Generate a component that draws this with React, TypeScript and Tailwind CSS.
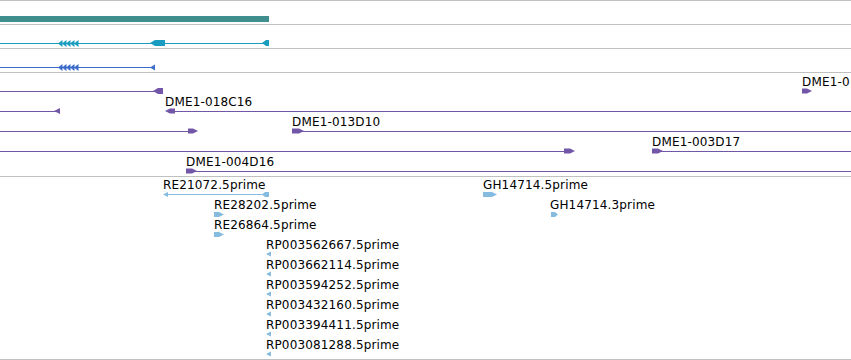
import React from "react";

type Label = { text: string; x: number; top: number };

// glyph helpers, all in page coordinates
const leftArrow = (x: number, y: number, w: number, h: number, tip = 5) =>
  `${x},${y} ${x + tip},${y - h / 2} ${x + w},${y - h / 2} ${x + w},${y + h / 2} ${x + tip},${y + h / 2}`;
const rightArrow = (x: number, y: number, w: number, h: number, tip = 5) =>
  `${x},${y - h / 2} ${x + w - tip},${y - h / 2} ${x + w},${y} ${x + w - tip},${y + h / 2} ${x},${y + h / 2}`;
const tri = (x: number, y: number, w: number, h: number) =>
  `${x},${y} ${x + w},${y - h / 2} ${x + w},${y + h / 2}`;

const cluster = (y: number) => [58, 62, 66, 70, 74].map((x) => tri(x, y, 4.5, 7));

const purpleLabels: Label[] = [
  { text: "DME1-0", x: 802, top: 75 },
  { text: "DME1-018C16", x: 165, top: 95 },
  { text: "DME1-013D10", x: 292, top: 115 },
  { text: "DME1-003D17", x: 652, top: 135 },
  { text: "DME1-004D16", x: 186, top: 155 },
];

const estLabels: Label[] = [
  { text: "RE21072.5prime", x: 163, top: 178 },
  { text: "GH14714.5prime", x: 483, top: 178 },
  { text: "RE28202.5prime", x: 214, top: 198 },
  { text: "GH14714.3prime", x: 550, top: 198 },
  { text: "RE26864.5prime", x: 214, top: 218 },
  { text: "RP003562667.5prime", x: 266, top: 238 },
  { text: "RP003662114.5prime", x: 266, top: 258 },
  { text: "RP003594252.5prime", x: 266, top: 278 },
  { text: "RP003432160.5prime", x: 266, top: 298 },
  { text: "RP003394411.5prime", x: 266, top: 318 },
  { text: "RP003081288.5prime", x: 266, top: 338 },
];

const Track = ({
  top,
  height,
  labels = [],
  children,
}: {
  top: number;
  height: number;
  labels?: Label[];
  children?: React.ReactNode;
}) => {
  return (
    <div className="relative w-full border-b border-[#c0c0c0] overflow-hidden" style={{ height: height + 1 }}>
      <svg
        className="absolute left-0 top-0"
        width={851}
        height={height}
        viewBox={`0 ${top} 851 ${height}`}
      >
        {children}
      </svg>
      {labels.map((l) => (
        <span
          key={l.text}
          className="absolute whitespace-nowrap text-[12px] leading-[14px] tracking-[0.15px] text-black font-['DejaVu_Sans',sans-serif]"
          style={{ left: l.x, top: l.top - top }}
        >
          {l.text}
        </span>
      ))}
    </div>
  );
};

const App = () => {
  const purple = "#7256a8";
  const est = "#86bbe0";
  return (
    <div className="w-[851px] h-[360px] bg-white border-t border-[#c0c0c0] overflow-hidden">
      <Track top={1} height={23}>
        <rect x={0} y={16} width={269} height={6} fill="#3f8f8f" />
      </Track>

      <Track top={25} height={23}>
        <line x1={0} y1={43.5} x2={266} y2={43.5} stroke="#1a9bc0" />
        {cluster(43.5).map((p, i) => (
          <polygon key={i} points={p} fill="#1a9bc0" />
        ))}
        <polygon points={leftArrow(150, 43, 15, 6)} fill="#1a9bc0" />
        <polygon points={leftArrow(262, 43, 7, 6, 4)} fill="#1a9bc0" />
      </Track>

      <Track top={49} height={23}>
        <line x1={0} y1={67.5} x2={152} y2={67.5} stroke="#3b6cc9" />
        {cluster(67.5).map((p, i) => (
          <polygon key={i} points={p} fill="#3b6cc9" />
        ))}
        <polygon points={tri(150, 67.5, 5, 6)} fill="#3b6cc9" />
      </Track>

      <Track top={73} height={103} labels={purpleLabels}>
        {/* row 1 */}
        <line x1={0} y1={91.5} x2={156} y2={91.5} stroke={purple} />
        <polygon points={leftArrow(153, 91, 10, 6)} fill={purple} />
        <polygon points={rightArrow(802, 91, 10, 5)} fill={purple} />
        {/* row 2 */}
        <line x1={0} y1={111.5} x2={56} y2={111.5} stroke={purple} />
        <polygon points={tri(54, 111, 6, 6)} fill={purple} />
        <line x1={168} y1={111.5} x2={851} y2={111.5} stroke={purple} />
        <polygon points={leftArrow(165, 111, 10, 5)} fill={purple} />
        {/* row 3 */}
        <line x1={0} y1={131.5} x2={190} y2={131.5} stroke={purple} />
        <polygon points={rightArrow(188, 131, 10, 5)} fill={purple} />
        <line x1={300} y1={131.5} x2={851} y2={131.5} stroke={purple} />
        <polygon points={rightArrow(292, 131, 12, 5)} fill={purple} />
        {/* row 4 */}
        <line x1={0} y1={151.5} x2={566} y2={151.5} stroke={purple} />
        <polygon points={rightArrow(564, 151, 11, 5)} fill={purple} />
        <line x1={660} y1={151.5} x2={851} y2={151.5} stroke={purple} />
        <polygon points={rightArrow(652, 151, 11, 5)} fill={purple} />
        {/* row 5 */}
        <line x1={194} y1={171.5} x2={851} y2={171.5} stroke={purple} />
        <polygon points={rightArrow(186, 171, 11, 5)} fill={purple} />
      </Track>

      <Track top={177} height={182} labels={estLabels}>
        <line x1={165} y1={194.5} x2={264} y2={194.5} stroke={est} />
        <polygon points={tri(163, 194.5, 5, 5)} fill={est} />
        <polygon points={leftArrow(262, 194.5, 7, 5, 3)} fill={est} />
        <polygon points={rightArrow(483, 194.5, 14, 5)} fill={est} />
        <polygon points={rightArrow(214, 214.5, 10, 5)} fill={est} />
        <polygon points={rightArrow(551, 214.5, 7, 5, 3)} fill={est} />
        <polygon points={rightArrow(214, 234.5, 10, 5)} fill={est} />
        {[254, 274, 294, 314, 334, 354].map((y) => (
          <polygon key={y} points={tri(266, y, 5, 5)} fill={est} />
        ))}
      </Track>
    </div>
  );
};

export default App;
